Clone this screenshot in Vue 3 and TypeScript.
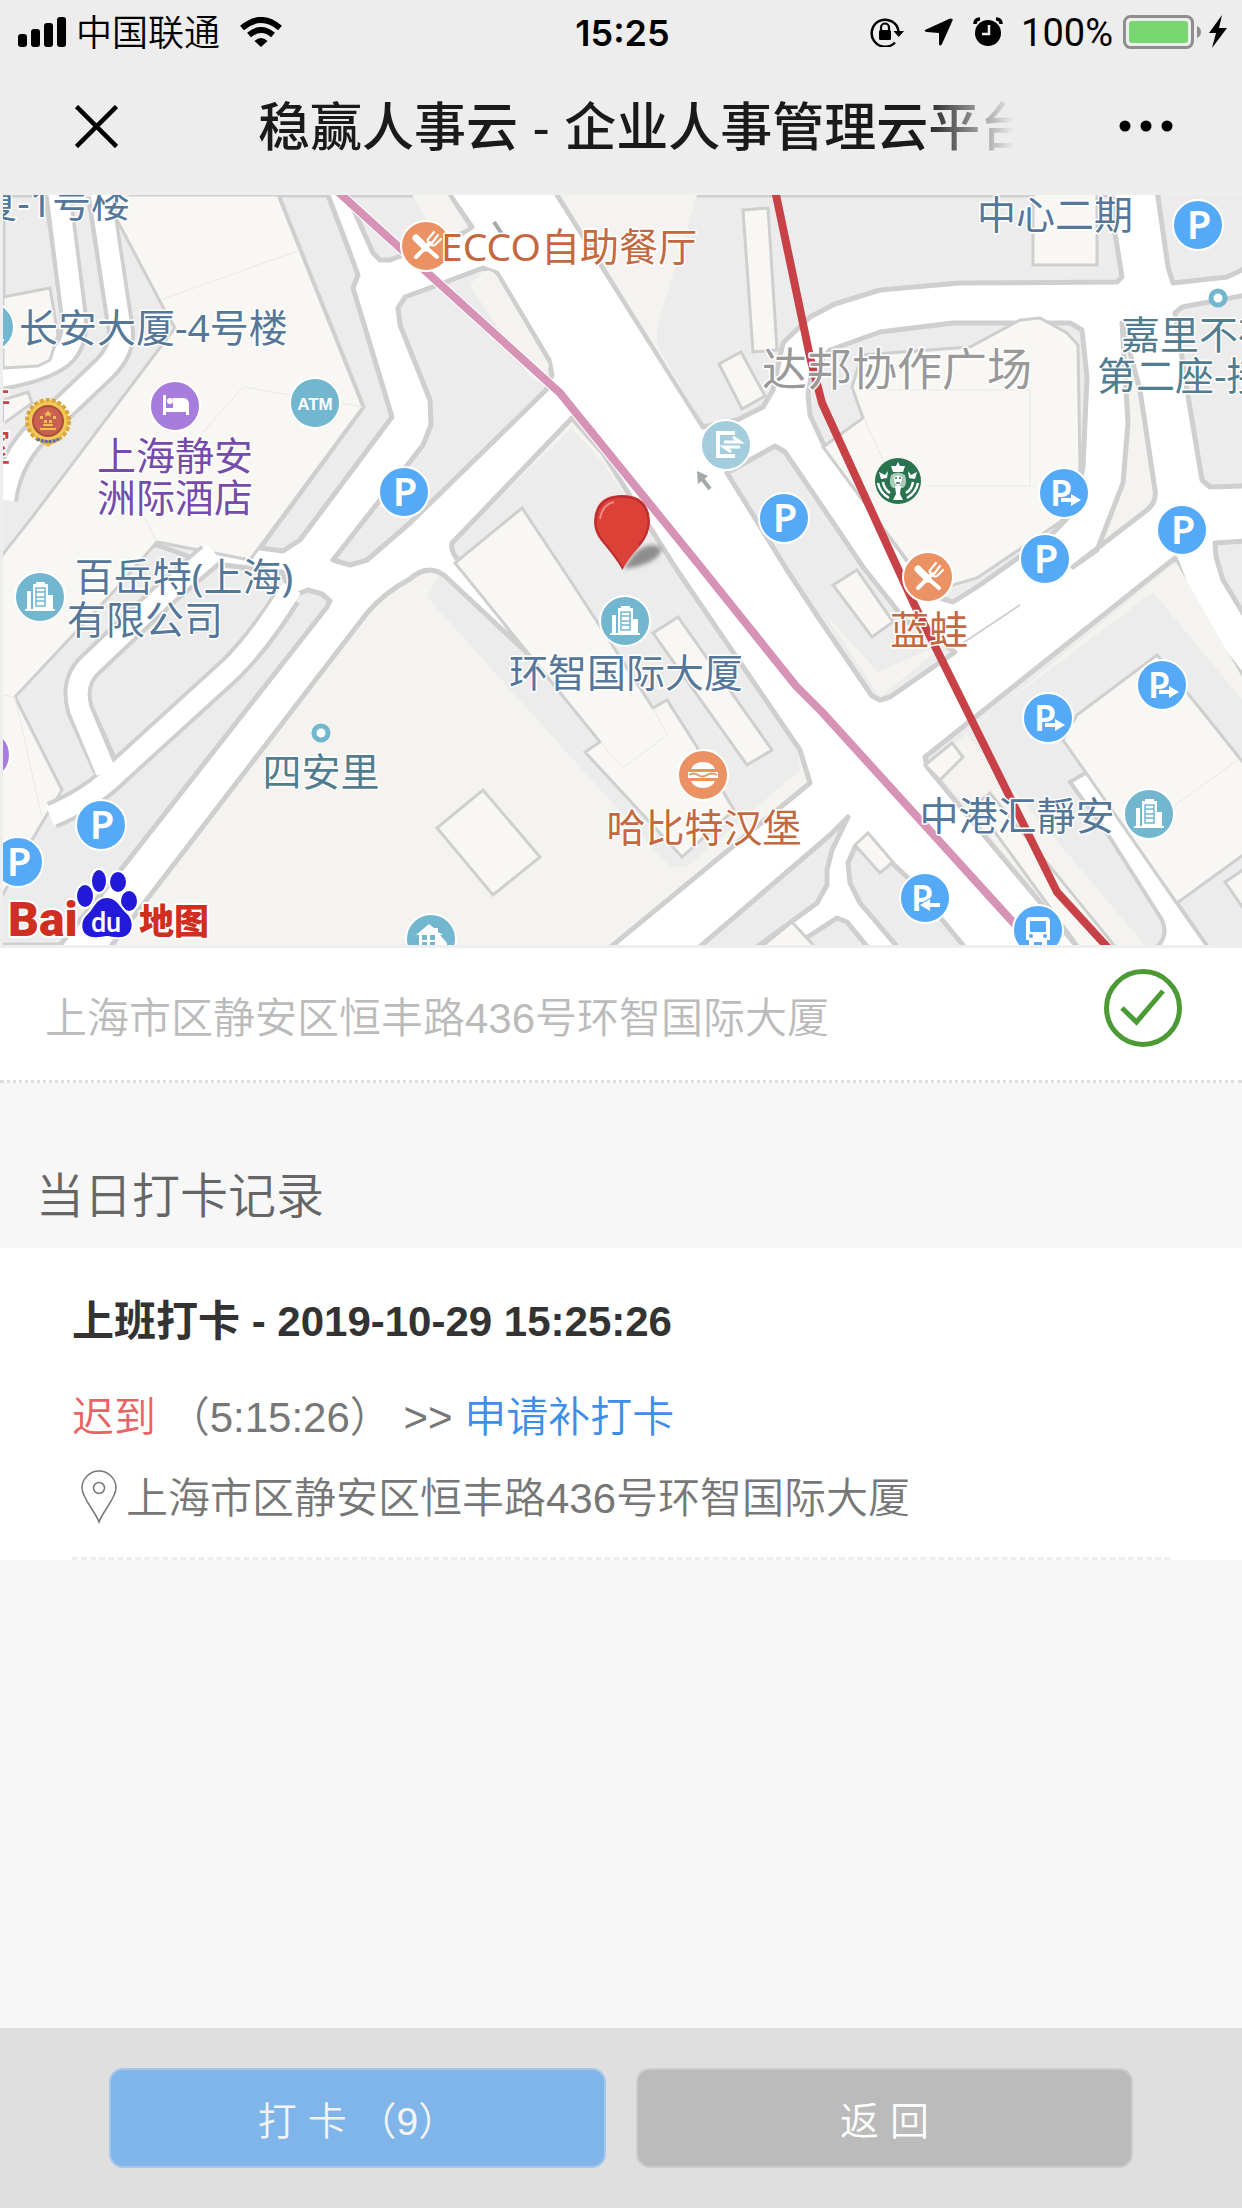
<script setup lang="ts">
interface Label {
  text: string
  x: number
  y: number
  tone: string
  anchor?: 'start' | 'middle' | 'end'
}

interface Spot {
  kind: string
  x: number
  y: number
}

const address = '上海市区静安区恒丰路436号环智国际大厦'

const labels: Label[] = [
  { text: '厦-1号楼', x: 130, y: 217, tone: 'blue', anchor: 'end' },
  { text: '长安大厦-4号楼', x: 19, y: 342, tone: 'blue', anchor: 'start' },
  { text: '上海静安', x: 175, y: 470, tone: 'purple' },
  { text: '洲际酒店', x: 175, y: 512, tone: 'purple' },
  { text: '百岳特(上海)', x: 184, y: 591, tone: 'blue' },
  { text: '有限公司', x: 145, y: 634, tone: 'blue' },
  { text: '四安里', x: 321, y: 786, tone: 'teal' },
  { text: '环智国际大厦', x: 626, y: 687, tone: 'blue' },
  { text: '哈比特汉堡', x: 704, y: 842, tone: 'orange' },
  { text: 'ECCO自助餐厅', x: 441, y: 261, tone: 'orange', anchor: 'start' },
  { text: '蓝蛙', x: 929, y: 644, tone: 'orange' },
  { text: '中港汇靜安', x: 1017, y: 830, tone: 'blue' },
  { text: '中心二期', x: 1055, y: 229, tone: 'blue' },
  { text: '达邦协作广场', x: 897, y: 386, tone: 'grey' },
  { text: '嘉里不夜城', x: 1121, y: 349, tone: 'teal', anchor: 'start' },
  { text: '第二座-接', x: 1097, y: 390, tone: 'teal', anchor: 'start' },
  { text: '行', x: 11, y: 421, tone: 'red', anchor: 'end' },
  { text: '室', x: 11, y: 461, tone: 'red', anchor: 'end' },
]

const spots: Spot[] = [
  { kind: 'parking', x: 404, y: 492 },
  { kind: 'parking', x: 784, y: 518 },
  { kind: 'parking', x: 1198, y: 225 },
  { kind: 'parking', x: 1182, y: 530 },
  { kind: 'parking', x: 1045, y: 559 },
  { kind: 'parking', x: 18, y: 862 },
  { kind: 'parking', x: 101, y: 825 },
  { kind: 'exit', x: 1064, y: 493 },
  { kind: 'exit', x: 1162, y: 685 },
  { kind: 'exit', x: 1048, y: 718 },
  { kind: 'entry', x: 925, y: 898 },
  { kind: 'bus', x: 1038, y: 930 },
  { kind: 'atm', x: 315, y: 403 },
  { kind: 'hotel', x: 175, y: 406 },
  { kind: 'hotel', x: -15, y: 755 },
  { kind: 'office', x: 40, y: 597 },
  { kind: 'office', x: 625, y: 621 },
  { kind: 'office', x: 1149, y: 814 },
  { kind: 'office', x: -11, y: 327 },
  { kind: 'house', x: 431, y: 939 },
  { kind: 'food', x: 426, y: 246 },
  { kind: 'food', x: 928, y: 577 },
  { kind: 'burger', x: 703, y: 775 },
  { kind: 'gate', x: 726, y: 445 },
  { kind: 'ring', x: 321, y: 733 },
  { kind: 'ring', x: 1218, y: 298 },
]

const blocks: string[] = [
  '3,195 45,195 51,230 62,312 62,345 50,355 3,368',
  '328,195 350,253 358,275 353,288 392,417 300,540 283,551 260,548 363,407 278,195',
  '347,195 373,253 380,260 390,260 463,233 472,227 450,195',
  '398,308 405,297 443,283 483,268 497,273 549,360 552,375 546,390 410,523 367,560 350,565 333,560 423,445 431,425 430,400 400,325',
  '157,545 207,563 282,572 292,596 308,590 322,594 330,601 327,607 123,867 60,945 -5,945 -5,560',
  '557,195 703,427 737,420 763,407 773,390 783,343 810,317 835,304 880,290 960,283 1117,282 1122,277 1115,233 1112,195',
  '830,350 880,332 953,323 1070,323 1082,330 1087,377 1083,467 1075,510 1053,533 980,585 953,602 940,598 907,560 823,443 810,415 808,395 812,370',
  '727,473 750,460 775,446 785,452 830,518 863,567 905,620 955,652 890,697 880,700 872,696 820,620 787,570',
  '1157,190 1168,267 1173,283 1227,277 1246,268 1246,190',
  '1175,313 1182,307 1246,295 1246,486 1210,487 1202,480 1187,390',
  '1215,543 1246,541 1246,618 1223,580 1216,557',
  '1175,558 925,757 927,767 1080,950 1246,950 1246,680 1217,643 1190,597 1180,570',
  '696,950 830,835 848,817 832,850 827,870 827,885 817,903 753,950',
  '803,940 837,918 847,922 870,950 810,950',
  '855,847 848,863 850,883 860,903 900,950 967,950 907,877 892,863',
]

const buildings: string[] = [
  '3,297 50,288 58,335 50,360 38,366 3,368',
  '3,400 28,392 32,403 3,424',
  '455,563 522,508 570,580 653,708 667,700 697,747 734,810 682,857 585,752 600,742',
  '653,633 678,617 772,750 747,765',
  '437,828 483,790 540,857 493,895',
  '743,210 768,208 777,350 753,352',
  '719,364 741,352 765,396 742,409',
  '1033,190 1033,265 1097,265 1097,190',
  '823,447 863,418 852,387 862,355 970,347 1020,320 1040,318 1067,333 1078,345 1080,467 1075,505 1060,522 977,578 953,585 907,560',
  '833,585 857,570 893,622 872,637',
  '1157,655 1246,766 1246,853 1177,903 1063,740 1077,715',
  '925,765 952,743 963,757 940,780',
  '1225,882 1246,868 1246,912',
  '855,845 868,833 893,862 880,873',
  '975,805 990,793 1118,950 1081,950',
  '760,948 792,922 816,948',
]
</script>

<template>
  <div class="screen">
    <header class="top">
      <div class="status">
        <div class="status-side">
          <svg width="48" height="30" viewBox="0 0 48 30" aria-hidden="true">
            <rect x="0" y="17" width="9" height="13" rx="3" />
            <rect x="13" y="12" width="9" height="18" rx="3" />
            <rect x="26" y="6" width="9" height="24" rx="3" />
            <rect x="39" y="0" width="9" height="30" rx="3" />
          </svg>
          <span class="carrier">中国联通</span>
          <svg class="wifi" width="42" height="30" viewBox="0 0 42 30" aria-hidden="true">
            <path d="M2 11 Q21 -5 40 11" fill="none" stroke="#000" stroke-width="6" />
            <path d="M9 18 Q21 8 33 18" fill="none" stroke="#000" stroke-width="6" />
            <path d="M14.500 24 Q21 18 27.500 24 L21 30Z" />
          </svg>
        </div>
        <time class="clock">15:25</time>
        <div class="status-side status-right">
          <svg width="34" height="30" viewBox="0 0 34 30" aria-hidden="true">
            <path d="M25 25.500 A13.500 13.500 0 1 1 28.500 14" fill="none" stroke="#000" stroke-width="2.500" />
            <path d="M23.500 14 H34 L28.700 20Z" />
            <rect x="9" y="13" width="12" height="10" rx="1.500" />
            <path d="M11 14 V10.500 a4 4 0 0 1 8 0 V14" fill="none" stroke="#000" stroke-width="2.200" />
          </svg>
          <svg class="locate" width="29" height="28" viewBox="0 0 29 28" aria-hidden="true">
            <path d="M28 1 Q29 0 28.500 2.500 L18 26 Q16 29 15 26 V15 L3 14 Q-1 13 2 11.500 L25 1 Q27 0 28 1Z" />
          </svg>
          <svg class="alarm" width="30" height="30" viewBox="0 0 30 30" aria-hidden="true">
            <circle cx="15" cy="16" r="13" />
            <path d="M2 7 Q2 2 7 2 M28 7 Q28 2 23 2" fill="none" stroke="#000" stroke-width="3.500" />
            <path d="M16 8 V17 H9" fill="none" stroke="#ededed" stroke-width="2.500" />
          </svg>
          <span class="percent">100%</span>
          <svg class="battery" width="78" height="34" viewBox="0 0 78 34" aria-hidden="true">
            <rect x="1.500" y="1.500" width="68" height="31" rx="6" fill="none" stroke="#8e8e8e" stroke-width="3" />
            <rect x="6" y="6" width="59" height="22" rx="3" fill="#78d770" />
            <path d="M74 11 Q78 13 78 17 Q78 21 74 23Z" fill="#8e8e8e" />
          </svg>
          <svg class="bolt" width="18" height="33" viewBox="0 0 18 33" aria-hidden="true">
            <path d="M13 0 L0 18 H7 L3 33 L18 13 H10Z" />
          </svg>
        </div>
      </div>
      <div class="nav">
        <button class="icon-button" type="button" aria-label="关闭">
          <svg width="43" height="43" viewBox="0 0 43 43" aria-hidden="true">
            <path d="M1.500 1.500 L41.500 41.500 M41.500 1.500 L1.500 41.500" stroke="#000" stroke-width="4.500" />
          </svg>
        </button>
        <h1 class="title">稳赢人事云 - 企业人事管理云平台</h1>
        <button class="icon-button" type="button" aria-label="更多">
          <svg width="54" height="12" viewBox="0 0 54 12" aria-hidden="true">
            <circle cx="6" cy="6" r="5.500" />
            <circle cx="27" cy="6" r="5.500" />
            <circle cx="48" cy="6" r="5.500" />
          </svg>
        </button>
      </div>
    </header>

    <section class="map" aria-label="地图">
      <svg class="map-canvas" viewBox="3 195 1239 750" preserveAspectRatio="xMidYMid slice">
        <rect x="3" y="195" width="1239" height="750" fill="#fff" />
        <rect x="3" y="195" width="200" height="360" fill="#ececec" />

        <!-- park beside the main tower, with the grey apron of the block -->
        <path
          d="M572 418 L452 543 Q450 552 460 562 L527 653 L445 576 Q428 563 410 579 Q385 592 367 613 L148 898 L108 950 H607 L810 783 L800 750 L677 570 L603 453Z"
          fill="#f4f3ef"
        />
        <path
          d="M572 428 L452 543 L460 562 L527 653 L440 573 L427 597 L670 867 H687 L800 770 L798 750 L677 570 L603 463Z"
          fill="#ececec"
        />
        <path
          d="M572 418 L452 543 Q450 552 460 562 L527 653 L445 576 Q428 563 410 579 Q385 592 367 613 L148 898 L108 950 H607 L810 783 L800 750 L677 570 L603 453Z"
          class="kerb"
        />

        <polygon v-for="shape in blocks" :key="shape" :points="shape" class="block" />

        <g fill="#f4f3ef">
          <path d="M560 195 H697 L657 327 V345 L703 424Z" />
          <path d="M1176 562 L1242 677 V700 L1153 592 L965 733 L1145 945 H1080 L930 764Z" />
          <path d="M470 285 L483 272 Q492 268 498 278 L549 365 L544 383 L532 380Z" />
          <path d="M412 195 H448 L468 228 L438 240Z" />
          <path d="M822 610 L878 672 L950 640 L880 697Z" />
          <path d="M1122 323 L1128 423 L1123 483 L1097 550 L1073 567 L1147 510 Q1157 502 1155 490 L1140 390Z" class="kerb-fill" />
        </g>

        <path d="M1070 782 L1087 772 L1177 903 L1210 950 H1153 Q1170 938 1162 920 L1107 833Z" class="lane" />

        <polygon
          points="108,195 117,220 163,307 175,328 162,345 30,520 0,558 0,900 32,840 42,823 62,790 15,697 115,590 157,542 250,560 363,407 300,250 278,195"
          class="building"
        />

        <g class="road-edge">
          <path d="M58 195 L73 310 Q78 345 58 358 Q40 370 0 377" />
          <path d="M100 195 L120 325 Q125 348 105 368 L45 425 Q10 455 4 500" />
          <path d="M288 596 Q260 640 232 668 L120 770 Q90 800 52 815" />
          <path d="M210 556 L165 594 L90 665 Q72 682 80 710 L106 768" />
        </g>
        <g class="road">
          <path d="M58 190 L73 310 Q78 345 58 358 Q40 370 0 377" />
          <path d="M100 190 L120 325 Q125 348 105 368 L45 425 Q10 455 4 500" />
          <path d="M292 588 Q260 640 232 668 L120 770 Q90 800 50 816" />
          <path d="M214 552 L165 594 L90 665 Q72 682 80 710 L106 772" />
        </g>

        <polygon v-for="shape in buildings" :key="shape" :points="shape" class="building" />

        <g class="hairline">
          <path d="M163 299 L300 250 M363 407 L243 387 L203 432 M143 515 L157 542 M3 695 L15 697 L42 818" />
          <path d="M653 708 L667 735 L623 768 L600 742 M864 418 L885 465 M866 390 H1030 V486 H925 M1175 805 L1242 757" />
        </g>
        <path d="M960 645 L1020 605" stroke="#cfcfcf" stroke-width="2" />
        <g fill="none" stroke="#a3a8a8" stroke-width="4">
          <path d="M494 222 L502 234 M710 489 L700 476" />
        </g>
        <path d="M697 471 L708 476 L698 484Z" fill="#a3a8a8" />

        <g fill="none" stroke-linejoin="round">
          <path d="M336 190 L560 393 L700 566 L796 686 L822 712 L1020 930" stroke="#fff" stroke-width="10" />
          <path d="M336 190 L560 393 L700 566 L796 686 L822 712 L1020 930" stroke="#d793b5" stroke-width="8" />
          <path d="M775 190 L810 357 L822 403 L915 606 L1057 892 L1110 950" stroke="#c74147" stroke-width="8" />
        </g>

        <g v-for="spot in spots" :key="`${spot.x}-${spot.y}`" :transform="`translate(${spot.x} ${spot.y})`">
          <circle v-if="spot.kind !== 'ring'" r="25" :class="['disc', spot.kind]" />
          <text v-if="spot.kind === 'parking'" class="glyph-p" x="1" y="14" text-anchor="middle">P</text>
          <template v-else-if="spot.kind === 'exit' || spot.kind === 'entry'">
            <text class="glyph-p small" x="-3" y="13" text-anchor="middle">P</text>
            <path
              d="M-3 5 H7 V1 L17 7 L7 13 V9 H-3Z"
              fill="#fff"
              stroke="#55aaf8"
              stroke-width="2"
              paint-order="stroke"
              :transform="spot.kind === 'entry' ? 'translate(12 0) scale(-1 1)' : undefined"
            />
          </template>
          <text v-else-if="spot.kind === 'atm'" class="glyph-atm" y="7" text-anchor="middle">ATM</text>
          <g v-else-if="spot.kind === 'hotel'" fill="#fff">
            <path d="M-12 -11 H-9 V2 H-2 V-8 H9 Q14 -7 14 -2 V9 H11 V6 H-9 V9 H-12Z" />
            <circle cx="-5" cy="-5" r="3" />
          </g>
          <g v-else-if="spot.kind === 'office'" fill="#fff">
            <path d="M-15 12 H15 V14 H-15Z M-13 -6 H-9 V12 H-13Z M-7 -13 H-4 V-15 H5 V-13 H8 V-2 H13 V12 H-7Z" />
            <path d="M-4 -9 H5 V9 H-4Z M-4 -5 H5 M-4 0 H5 M-4 4 H5" fill="none" stroke="#72b6d0" stroke-width="1.500" />
          </g>
          <g v-else-if="spot.kind === 'house'">
            <path d="M-15 -4 L-2 -15 L3 -11 H7 V-7 L12 -4 H9 L16 4 V10 H-12 V-4Z" fill="#fff" />
            <path d="M-9 -4 h5 v5 h-5z M-1 -4 h5 v5 h-5z M-9 3 h5 v5 h-5z M-1 3 h5 v5 h-5z" fill="#72b6d0" />
          </g>
          <g v-else-if="spot.kind === 'food'" fill="none" stroke="#fff" stroke-linecap="round">
            <path d="M-10 -8 L0 2" stroke-width="7" />
            <path d="M-4 -2 L11 11 M-10 11 L4 -3" stroke-width="4" />
            <path d="M3 -4 Q0 -5 3 -8 L8 -14 M6 -3 L12 -11 M4 -2 Q8 1 10 -2 L15 -7" stroke-width="2.200" />
          </g>
          <g v-else-if="spot.kind === 'burger'">
            <path d="M-12 -6 Q-9 -13 0 -13 Q9 -13 12 -6Z M-12 6 H12 Q9 13 0 13 Q-9 13 -12 6Z" fill="#fff" />
            <path d="M-15 -3 H15 V3 H-15Z" fill="#fff" />
            <path d="M-14 0 Q-9 -3 -5 0 T4 0 T14 0" fill="none" stroke="#eb9264" stroke-width="2" />
          </g>
          <g v-else-if="spot.kind === 'gate'">
            <path d="M9 -12 H-8 V11 H9" fill="none" stroke="#fff" stroke-width="4" />
            <path d="M-2 -3 H14 L7 -8 M14 2 H-2 L5 7" fill="none" stroke="#fff" stroke-width="3" />
          </g>
          <g v-else-if="spot.kind === 'bus'">
            <path d="M-8 -13 H8 Q12 -13 12 -9 V10 H9 V15 H4 V12 H-4 V15 H-9 V10 H-12 V-9 Q-12 -13 -8 -13Z" fill="#fff" />
            <rect x="-8" y="-9" width="16" height="11" rx="1" fill="#55aaf8" />
            <circle cx="-7" cy="6" r="2" fill="#55aaf8" />
            <circle cx="7" cy="6" r="2" fill="#55aaf8" />
          </g>
          <circle v-else r="7" fill="#fff" stroke="#72b6d0" stroke-width="5" />
        </g>

        <text
          v-for="label in labels"
          :key="label.text"
          :x="label.x"
          :y="label.y"
          :text-anchor="label.anchor ?? 'middle'"
          :class="['label', label.tone]"
        >{{ label.text }}</text>

        <!-- court emblem -->
        <g transform="translate(48 421)">
          <path d="M-12 18 L0 26 L12 18Z" fill="#e8bd48" />
          <circle r="21" fill="#efcb55" stroke="#dba63d" stroke-width="4" stroke-dasharray="4 2" />
          <circle r="15" fill="#c86152" stroke="#b24b3c" stroke-width="2" />
          <path d="M0 -11 L1.500 -8 H4 L2 -6 L3 -4 L0 -5.500 L-3 -4 L-2 -6 L-4 -8 H-1.500Z M-5 3 H5 V5 H-5Z M-8 7 H8 V9 H-8Z" fill="#efc04f" />
          <path d="M-8 -5 h3 v3 h-3z M5 -5 h3 v3 h-3z M-4 -1 h3 v3 h-3z M1 -1 h3 v3 h-3z" fill="#efc04f" />
          <path d="M-11 18 Q0 23 11 18" fill="none" stroke="#5c6baf" stroke-width="3" stroke-dasharray="3 1" />
        </g>

        <!-- coffee house -->
        <g transform="translate(898 481)">
          <circle r="23" fill="#2a7350" />
          <path d="M-19 -9 L-13 -6 L-10 -10 L-11 -3 L-17 -2Z M19 -9 L13 -6 L10 -10 L11 -3 L17 -2Z" fill="#fff" />
          <path d="M0 -19 L2 -15 L7 -15 L5 -9 H-5 L-7 -15 L-2 -15Z" fill="#fff" />
          <path d="M-7 -6 Q0 -11 7 -6 Q10 4 5 7 H-5 Q-10 4 -7 -6Z" fill="#a9cbb8" />
          <path d="M-4 -4 Q0 -7 4 -4 Q4 3 0 5 Q-4 3 -4 -4Z" fill="#fff" />
          <path d="M-3 5 H3 L2 13 L5 19 H-5 L-2 13Z" fill="#fff" />
          <path d="M-20 2 Q-18 12 -9 17 M20 2 Q18 12 9 17 M-15 1 Q-14 8 -8 12 M15 1 Q14 8 8 12" fill="none" stroke="#fff" stroke-width="2.500" />
          <path d="M-3 -3 h2 M1 -3 h2 M-2 2 h4" stroke="#2a7350" stroke-width="1.500" />
        </g>

        <!-- current position -->
        <g>
          <path class="shadow" d="M624 569 Q636 546 652 545 Q668 546 656 558 Q645 566 624 569Z" />
          <path d="M622.500 570 Q618 560 602 542 Q594 533 594 521 Q595 495 622 495 Q649 495 650 521 Q650 534 640 546 Q627 560 622.500 570Z" fill="#db4137" />
          <path d="M622.500 568 Q618 560 603 541 Q595 531 595.500 521 Q597 497 622 496.500 Q647 497 648.500 521 Q649 533 639 545" fill="none" stroke="#bd2c33" stroke-width="2" />
          <path d="M600 519 Q602 505 614 502" fill="none" stroke="#ee8b86" stroke-width="2" />
        </g>

        <!-- map provider mark -->
        <g class="brand">
          <text x="8" y="936" class="brand-latin">Bai</text>
          <g class="paw">
            <ellipse cx="85" cy="896" rx="8" ry="11" />
            <ellipse cx="99" cy="881" rx="7" ry="11" />
            <ellipse cx="118" cy="882" rx="8" ry="10" />
            <ellipse cx="129" cy="901" rx="8" ry="10" />
            <path d="M107 898 C117 898 120 908 127 914 C134 920 134 936 121 937 C114 938 112 936 107 936 C102 936 99 938 93 937 C80 936 80 921 87 915 C94 909 96 898 107 898Z" />
          </g>
          <text x="106" y="932" class="brand-du" text-anchor="middle">du</text>
          <text x="139" y="934" class="brand-cjk">地图</text>
        </g>
      </svg>
    </section>

    <section class="address">
      <p>{{ address }}</p>
      <svg width="78" height="78" viewBox="0 0 78 78" role="img" aria-label="已定位">
        <circle cx="39" cy="39" r="36.500" fill="none" stroke="#4b9a34" stroke-width="5" />
        <path d="M18 39 L32.500 53 L59 22" fill="none" stroke="#4b9a34" stroke-width="5" />
      </svg>
    </section>

    <main class="records">
      <h2>当日打卡记录</h2>
      <div class="card">
        <article class="record">
          <h3>上班打卡 - 2019-10-29 15:25:26</h3>
          <p class="state"><span class="late">迟到</span> （5:15:26） &gt;&gt; <a href="#apply">申请补打卡</a></p>
          <p class="place">
            <svg width="36" height="54" viewBox="0 0 36 54" aria-hidden="true">
              <path d="M18 52 C14 41 1 28 1 18 A17 17 0 0 1 35 18 C35 28 22 41 18 52Z" fill="none" stroke="#777" stroke-width="1.500" />
              <circle cx="18" cy="18" r="5.500" fill="none" stroke="#777" stroke-width="1.500" />
            </svg>
            <span>{{ address }}</span>
          </p>
        </article>
      </div>
    </main>

    <footer class="actions">
      <button class="action primary" type="button">打 卡 （9）</button>
      <button class="action" type="button">返 回</button>
    </footer>
  </div>
</template>

<style>
body {
  margin: 0;
  background: #f7f7f7;
}
</style>

<style scoped>
.screen {
  display: flex;
  flex-direction: column;
  min-height: 100vh;
  background: #f7f7f7;
  color: #777;
  font-family: "Liberation Sans", "Noto Sans CJK SC", sans-serif;
  font-size: 42px;
}

h1,
h2,
h3,
p {
  margin: 0;
}

svg {
  display: block;
  flex: none;
}

.top {
  background: #ededed;
  color: #000;
}

.status {
  display: grid;
  grid-template-columns: 1fr auto 1fr;
  align-items: center;
  height: 60px;
  padding: 0 15px 0 18px;
  font-family: Inter, "Noto Sans CJK SC", sans-serif;
  font-size: 36px;
  line-height: 60px;
}

.status-side {
  display: flex;
  align-items: center;
}

.status-right {
  justify-content: flex-end;
}

.carrier {
  margin: 0 20px 0 10px;
  padding-top: 3px;
  font-weight: 350;
}

.clock {
  padding-top: 2px;
  font-weight: 600;
}

.locate {
  margin-left: 20px;
}

.alarm {
  margin: 0 18px 0 20px;
}

.percent {
  padding-top: 3px;
  font-family: Roboto, sans-serif;
  font-size: 38px;
}

.battery {
  margin: 0 8px 0 10px;
}

.nav {
  display: flex;
  align-items: center;
  height: 132px;
  padding: 0 54px;
}

.icon-button {
  display: flex;
  align-items: center;
  justify-content: center;
  flex: none;
  width: 84px;
  height: 84px;
  padding: 0;
  border: 0;
  background: none;
}

.title {
  flex: 1;
  min-width: 0;
  margin: 0 90px 0 120px;
  padding-top: 3px;
  overflow: hidden;
  white-space: nowrap;
  color: #1a1a1a;
  font-size: 52px;
  font-weight: 500;
  line-height: 78px;
  mask-image: linear-gradient(to right, #000 88%, transparent 100%);
}

.map {
  border: 3px solid #eee;
  border-right: 0;
}

.map-canvas {
  width: 100%;
  height: 750px;
}

.block {
  fill: #ececec;
  stroke: #cfcfcf;
  stroke-width: 5;
  stroke-linejoin: round;
}

.building {
  fill: #f8f7f4;
  stroke: #cfcfcf;
  stroke-width: 3;
}

.kerb,
.kerb-fill {
  stroke: #cfcfcf;
  stroke-width: 5;
  stroke-linejoin: round;
}

.kerb {
  fill: none;
}

.lane {
  fill: #fff;
  stroke: #cfcfcf;
  stroke-width: 4;
}

.road-edge,
.road {
  fill: none;
  stroke: #cfcfcf;
  stroke-width: 28;
}

.road {
  stroke: #fff;
  stroke-width: 20;
}

.hairline {
  fill: none;
  stroke: #e9e8e6;
  stroke-width: 1;
}

.label {
  font-family: "Noto Sans", "Noto Sans CJK SC", sans-serif;
  font-size: 39px;
  paint-order: stroke;
  stroke: #fff;
  stroke-width: 3;
  stroke-linejoin: round;
}

.blue {
  fill: #557799;
}

.teal {
  fill: #527d90;
}

.purple {
  fill: #754bab;
}

.orange {
  fill: #c4693f;
}

.red {
  fill: #c74840;
}

.grey {
  fill: #999;
  font-size: 45px;
}

.disc {
  fill: #55aaf8;
  stroke: #fff;
  stroke-width: 2;
}

.atm,
.office,
.house {
  fill: #72b6d0;
}

.hotel {
  fill: #a77cdc;
}

.food,
.burger {
  fill: #eb9264;
}

.gate {
  fill: #a3ccdd;
}

.glyph-p {
  fill: #fff;
  font-family: "Noto Sans", sans-serif;
  font-size: 40px;
  font-weight: 600;
}

.small {
  font-size: 36px;
}

.glyph-atm {
  fill: #fff;
  font-family: "Liberation Sans", sans-serif;
  font-size: 17px;
  font-weight: 700;
}

.shadow {
  fill: #666;
  opacity: 0.7;
  filter: blur(2px);
}

.brand {
  paint-order: stroke;
  stroke: #fff;
  stroke-width: 4;
  stroke-linejoin: round;
}

.brand-latin,
.brand-cjk {
  fill: #d02e20;
  font-family: Roboto, sans-serif;
  font-size: 48px;
  font-weight: 900;
}

.brand-cjk {
  font-family: "Noto Sans CJK SC", sans-serif;
  font-size: 35px;
}

.paw {
  fill: #2319d8;
}

.brand-du {
  fill: #fff;
  stroke: none;
  font-family: Roboto, sans-serif;
  font-size: 27px;
  font-weight: 500;
}

.address {
  display: flex;
  align-items: center;
  justify-content: space-between;
  height: 132px;
  padding: 0 60px 0 45px;
  border-bottom: 3px dotted #ddd;
  background: #fff;
  color: #bbb;
  font-weight: 350;
}

.address svg {
  margin-bottom: 12px;
}

.records {
  flex: 1;
}

.records h2 {
  padding: 78px 36px 15px;
  color: #666;
  font-size: 48px;
  font-weight: 350;
  line-height: 72px;
}

.card {
  padding: 0 72px;
  background: #fff;
}

.record {
  padding: 44px 0 30px;
  border-bottom: 3px dashed #eee;
  font-weight: 350;
}

.record h3 {
  color: #333;
  font-size: 42px;
  font-weight: 700;
  line-height: 60px;
}

.state {
  padding: 36px 0 22px;
  line-height: 60px;
}

.late {
  color: #e86464;
}

.state a {
  color: #3e8ee8;
  text-decoration: none;
}

.place {
  display: flex;
  align-items: flex-start;
  gap: 9px;
  padding-left: 9px;
  line-height: 57px;
}

.actions {
  display: flex;
  gap: 30px;
  padding: 40px 109px;
  background: #dfdfdf;
}

.action {
  flex: 1;
  height: 100px;
  padding: 0;
  border: 2px solid #ccc;
  border-radius: 14px;
  background: #bbb;
  color: #fff;
  font-family: inherit;
  font-size: 39px;
  font-weight: 350;
}

.primary {
  border-color: #a5c7ea;
  background: #80b5ea;
  color: #f3f3f3;
}
</style>
